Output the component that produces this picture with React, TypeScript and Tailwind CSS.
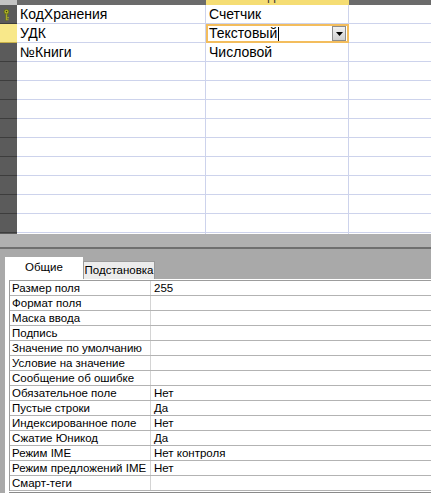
import React from "react";

const FIELDS = [
  { name: "КодХранения", type: "Счетчик" },
  { name: "УДК", type: "Текстовый" },
  { name: "№Книги", type: "Числовой" },
];

const PROPS: [string, string][] = [
  ["Размер поля", "255"],
  ["Формат поля", ""],
  ["Маска ввода", ""],
  ["Подпись", ""],
  ["Значение по умолчанию", ""],
  ["Условие на значение", ""],
  ["Сообщение об ошибке", ""],
  ["Обязательное поле", "Нет"],
  ["Пустые строки", "Да"],
  ["Индексированное поле", "Нет"],
  ["Сжатие Юникод", "Да"],
  ["Режим IME", "Нет контроля"],
  ["Режим предложений IME", "Нет"],
  ["Смарт-теги", ""],
];

function KeyIcon() {
  return (
    <svg width="7" height="12" viewBox="0 0 7 12">
      <circle cx="3.5" cy="2.8" r="2.4" fill="#b9b92a" stroke="#5d6b12" strokeWidth="0.8" />
      <circle cx="3.5" cy="2.6" r="0.8" fill="#3b3b10" />
      <rect x="2.7" y="5" width="1.6" height="6.5" fill="#a8a82a" stroke="#5d6b12" strokeWidth="0.5" />
      <rect x="4.3" y="8" width="1.6" height="1.2" fill="#a8a82a" />
      <rect x="4.3" y="10" width="1.2" height="1.2" fill="#a8a82a" />
    </svg>
  );
}

function DropButton() {
  return (
    <div className="flex h-[15px] w-[14px] items-center justify-center border border-[#8c8c8c] bg-gradient-to-b from-[#f2f2f2] to-[#cfcfcf]">
      <svg width="7" height="4" viewBox="0 0 7 4">
        <path d="M0 0h7L3.5 4z" fill="#000" />
      </svg>
    </div>
  );
}

export default function App() {
  const rows = Array.from({ length: 12 }, (_, i) => FIELDS[i]);

  return (
    <div
      className="flex h-[493px] w-[431px] flex-col overflow-hidden bg-[#a9a9a9]"
      style={{ fontFamily: '"Liberation Sans", Arial, sans-serif' }}
    >
      {/* table design grid */}
      <div className="flex h-[235px] flex-col bg-white">
        <div className="flex h-[5px] overflow-hidden text-[13px] leading-[16px]">
          <div className="w-[17px] bg-[#c4c4c4]" />
          <div className="flex w-[189px] justify-center bg-[#6b6b6b] text-[#eeeeee]">
            <span className="-mt-[12px]">Имя поля</span>
          </div>
          <div className="flex w-[143px] justify-center bg-[#f5dd74] text-[#333]">
            <span className="-mt-[12px]">Тип данных</span>
          </div>
          <div className="flex-1 bg-[#6b6b6b]" />
        </div>
        {rows.map((f, i) => (
          <div key={i} className="flex h-[19px] text-[14px] text-black">
            <div
              className={
                i === 1
                  ? "flex w-[17px] items-center border-b border-[#c9b24a] bg-[#f8e88a]"
                  : "flex w-[17px] items-center border-b border-[#3d3d3d] bg-[#5b5b5b]"
              }
            >
              {i === 0 && (
                <span className="ml-[3px] mt-[1px] flex">
                  <KeyIcon />
                </span>
              )}
            </div>
            <div className="flex w-[189px] items-center border-b border-r border-[#cdd3ec] pl-[3px]">
              {f?.name}
            </div>
            {i === 1 ? (
              <div className="flex w-[143px] items-center border-2 border-[#f3bd5d] pl-[1px] pr-[1px]">
                <span>{f?.type}</span>
                <span className="ml-[1px] h-[14px] w-[1px] bg-black" />
                <span className="ml-auto flex">
                  <DropButton />
                </span>
              </div>
            ) : (
              <div className="flex w-[143px] items-center border-b border-r border-[#cdd3ec] pl-[3px]">
                {f?.type}
              </div>
            )}
            <div className="flex-1 border-b border-[#cdd3ec]" />
          </div>
        ))}
        <div className="flex flex-1">
          <div className="w-[17px] bg-[#5b5b5b]" />
          <div className="w-[189px] border-r border-[#cdd3ec]" />
          <div className="w-[143px] border-r border-[#cdd3ec]" />
        </div>
      </div>

      {/* splitter */}
      <div className="h-[13px] bg-[#b0b0b0]" />
      <div className="h-[2px] bg-[#6f6f6f]" />

      {/* tabs */}
      <div className="flex h-[30px] items-end pl-[5px] text-[11.5px]">
        <div className="flex h-[22px] w-[78px] items-center justify-center bg-white text-black">
          Общие
        </div>
        <div className="flex h-[18px] w-[72px] items-center justify-center whitespace-nowrap border border-b-0 border-[#9a9a9a] bg-[#ececec] text-black">
          Подстановка
        </div>
      </div>

      {/* property sheet */}
      <div className="ml-[5px] flex flex-col bg-white pl-[4px] pt-[1px]">
        <div className="flex flex-col border-l border-t border-[#9c9c9c]">
          {PROPS.map(([label, value], i) => (
            <div key={i} className="flex h-[15px] border-b border-[#b3b3b3] text-[11.5px] leading-[14px] text-black">
              <div className="w-[141px] whitespace-nowrap border-r border-[#d4d4d4] pl-[2px]">{label}</div>
              <div className="flex-1 pl-[3px]">{value}</div>
            </div>
          ))}
        </div>
        <div className="h-[2px] border-b border-[#8a8a8a]" />
      </div>
    </div>
  );
}
